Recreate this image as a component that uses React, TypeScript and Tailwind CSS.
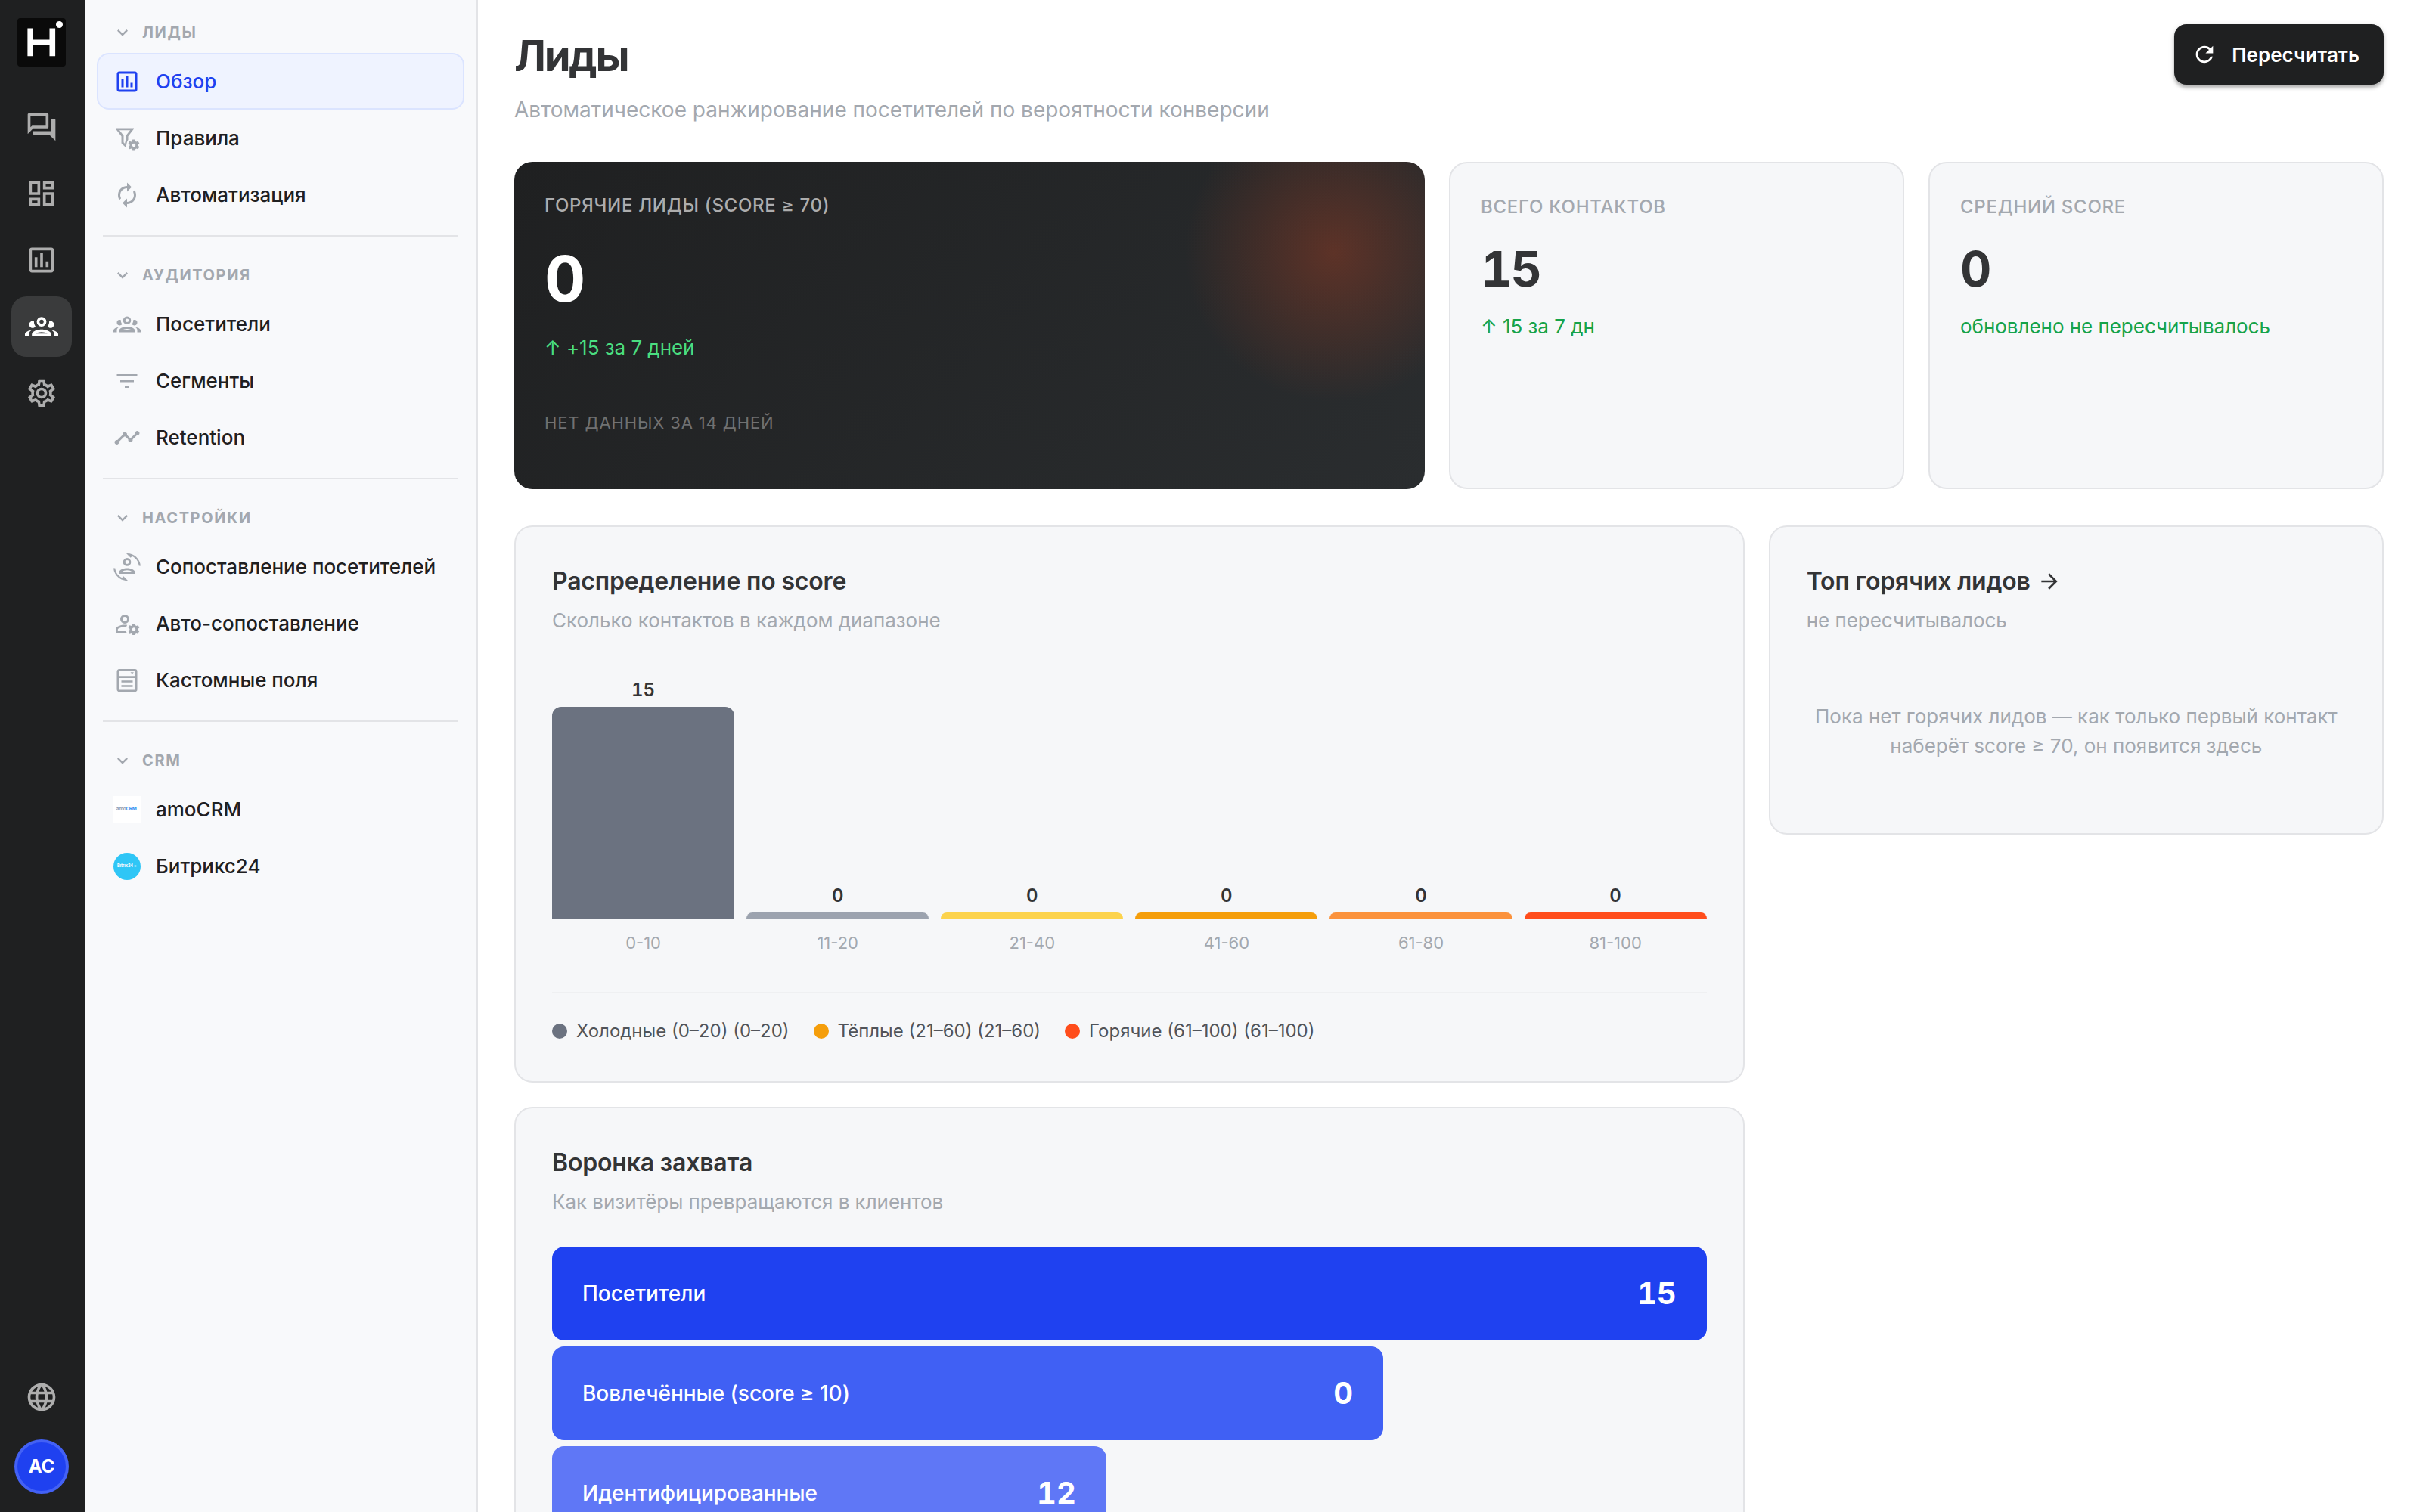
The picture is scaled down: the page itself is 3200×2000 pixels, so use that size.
import type { ReactNode } from "react";
import {
  MdArrowForward,
  MdAutorenew,
  MdExpandMore,
  MdFilterList,
  MdLanguage,
  MdOutlineAssessment,
  MdOutlineDashboard,
  MdOutlineForum,
  MdRefresh,
  MdTimeline,
} from "react-icons/md";

type IconProps = { className?: string };

const cogPath =
  "M17 12C16.84 12 16.76 12.08 16.76 12.21L16.5 13.5C16.28 13.68 15.96 13.84 15.72 14L14.44 13.5C14.36 13.5 14.2 13.5 14.12 13.6L13.16 15.36C13.08 15.44 13.08 15.6 13.24 15.68L14.28 16.5V17.5L13.24 18.32C13.16 18.4 13.08 18.56 13.16 18.64L14.12 20.4C14.2 20.5 14.36 20.5 14.44 20.5L15.72 20C15.96 20.16 16.28 20.32 16.5 20.5L16.76 21.79C16.76 21.92 16.84 22 17 22H19C19.08 22 19.24 21.92 19.24 21.79L19.4 20.5C19.72 20.32 20.04 20.16 20.28 20L21.5 20.5C21.64 20.5 21.8 20.5 21.8 20.4L22.84 18.64C22.92 18.56 22.84 18.4 22.76 18.32L21.72 17.5V16.5L22.76 15.68C22.84 15.6 22.92 15.44 22.84 15.36L21.8 13.6C21.8 13.5 21.64 13.5 21.5 13.5L20.28 14C20.04 13.84 19.72 13.68 19.4 13.5L19.24 12.21C19.24 12.08 19.08 12 19 12H17M18.04 15.5C18.84 15.5 19.5 16.16 19.5 17.04C19.5 17.84 18.84 18.5 18.04 18.5C17.16 18.5 16.5 17.84 16.5 17.04C16.5 16.16 17.16 15.5 18.04 15.5Z";

const FilterCogIcon = ({ className }: IconProps) => (
  <svg viewBox="0 0 24 24" fill="currentColor" className={className}>
    <path fillRule="evenodd" d="M2 3h16v.7L13 10.1V13.2Q11.3 15.5 11.2 20.4L7 16.3V10.1L2 3.7V3zM5.3 4.9 9 9.5v6l1.100 1.1q.2-1.7.9-3V9.5l3.7-4.6H5.3z" />
    <path fillRule="evenodd" transform="translate(0 1)" d={cogPath} />
  </svg>
);

const AccountCogIcon = ({ className }: IconProps) => (
  <svg viewBox="0 0 24 24" fill="currentColor" className={className}>
    <path
      fillRule="evenodd"
      d="M10 4A4 4 0 0 0 6 8A4 4 0 0 0 10 12A4 4 0 0 0 14 8A4 4 0 0 0 10 4M10 6A2 2 0 0 1 12 8A2 2 0 0 1 10 10A2 2 0 0 1 8 8A2 2 0 0 1 10 6M10 13C7.33 13 2 14.33 2 17V20H11.67C11.39 19.41 11.19 18.77 11.09 18.1H3.9V17C3.9 16.36 7.03 14.9 10 14.9C10.43 14.9 10.87 14.94 11.3 15C11.5 14.36 11.77 13.76 12.12 13.21C11.34 13.08 10.6 13 10 13"
    />
    <path fillRule="evenodd" d={cogPath} />
  </svg>
);

const GroupIcon = ({ className }: IconProps) => (
  <svg viewBox="0 0 24 24" fill="currentColor" className={className}>
    <path
      fillRule="evenodd"
      d="M12,5A3.5,3.5 0 0,0 8.5,8.5A3.5,3.5 0 0,0 12,12A3.5,3.5 0 0,0 15.5,8.5A3.5,3.5 0 0,0 12,5M12,7A1.5,1.5 0 0,1 13.5,8.5A1.5,1.5 0 0,1 12,10A1.5,1.5 0 0,1 10.5,8.5A1.5,1.5 0 0,1 12,7M5.5,8A2.5,2.5 0 0,0 3,10.5C3,11.44 3.53,12.25 4.29,12.68C4.65,12.88 5.06,13 5.5,13C5.94,13 6.35,12.88 6.71,12.68C7.08,12.47 7.39,12.17 7.62,11.81C6.89,10.86 6.5,9.7 6.5,8.5C6.5,8.41 6.5,8.31 6.5,8.22C6.2,8.08 5.86,8 5.5,8M18.5,8C18.14,8 17.8,8.08 17.5,8.22C17.5,8.31 17.5,8.41 17.5,8.5C17.5,9.7 17.11,10.86 16.38,11.81C16.5,12 16.63,12.15 16.78,12.3C16.94,12.45 17.1,12.58 17.29,12.68C17.65,12.88 18.06,13 18.5,13C18.94,13 19.35,12.88 19.71,12.68C20.47,12.25 21,11.44 21,10.5A2.5,2.5 0 0,0 18.5,8M12,14C9.66,14 5,15.17 5,17.5V19H19V17.5C19,15.17 14.34,14 12,14M4.71,14.55C2.78,14.78 0,15.76 0,17.5V19H3V17.07C3,16.06 3.69,15.22 4.71,14.55M19.29,14.55C20.31,15.22 21,16.06 21,17.07V19H24V17.5C24,15.76 21.22,14.78 19.29,14.55M12,16C13.53,16 15.24,16.5 16.23,17H7.77C8.76,16.5 10.47,16 12,16Z"
    />
  </svg>
);

const CogIcon = ({ className }: IconProps) => (
  <svg viewBox="0 0 24 24" fill="currentColor" className={className}>
    <path
      fillRule="evenodd"
      d="M12,8A4,4 0 0,1 16,12A4,4 0 0,1 12,16A4,4 0 0,1 8,12A4,4 0 0,1 12,8M12,10A2,2 0 0,0 10,12A2,2 0 0,0 12,14A2,2 0 0,0 14,12A2,2 0 0,0 12,10M10,22C9.75,22 9.54,21.82 9.5,21.58L9.13,18.93C8.5,18.68 7.96,18.34 7.44,17.94L4.95,18.95C4.73,19.03 4.46,18.95 4.34,18.73L2.34,15.27C2.21,15.05 2.27,14.78 2.46,14.63L4.57,12.97L4.5,12L4.57,11L2.46,9.37C2.27,9.22 2.21,8.95 2.34,8.73L4.34,5.27C4.46,5.05 4.73,4.96 4.95,5.05L7.44,6.05C7.96,5.66 8.5,5.32 9.13,5.07L9.5,2.42C9.54,2.18 9.75,2 10,2H14C14.25,2 14.46,2.18 14.5,2.42L14.87,5.07C15.5,5.32 16.04,5.66 16.56,6.05L19.05,5.05C19.27,4.96 19.54,5.05 19.66,5.27L21.66,8.73C21.79,8.95 21.73,9.22 21.54,9.37L19.43,11L19.5,12L19.43,13L21.54,14.63C21.73,14.78 21.79,15.05 21.66,15.27L19.66,18.73C19.54,18.95 19.27,19.04 19.05,18.95L16.56,17.95C16.04,18.34 15.5,18.68 14.87,18.93L14.5,21.58C14.46,21.82 14.25,22 14,22H10M11.25,4L10.88,6.61C9.68,6.86 8.62,7.5 7.85,8.39L5.44,7.35L4.69,8.65L6.8,10.2C6.4,11.37 6.4,12.64 6.8,13.8L4.68,15.36L5.43,16.66L7.86,15.62C8.63,16.5 9.68,17.14 10.87,17.38L11.24,20H12.76L13.13,17.39C14.32,17.14 15.37,16.5 16.14,15.62L18.57,16.66L19.32,15.36L17.2,13.81C17.6,12.64 17.6,11.37 17.2,10.2L19.31,8.65L18.56,7.35L16.15,8.39C15.38,7.5 14.32,6.86 13.12,6.62L12.75,4H11.25Z"
    />
  </svg>
);

const PersonSyncIcon = ({ className }: IconProps) => (
  <svg viewBox="0 0 24 24" fill="currentColor" className={className}>
    <path d="M7.52 21.48C4.25 19.94 1.91 16.76 1.55 13H.05C.56 19.16 5.71 24 12 24l.66-.03-3.81-3.81-1.33 1.32zM12 0l-.66.03 3.81 3.81 1.33-1.33c3.27 1.55 5.61 4.72 5.96 8.48h1.5C23.44 4.84 18.29 0 12 0z" />
    <circle cx="12" cy="7.6" r="2.6" fill="none" stroke="currentColor" strokeWidth="1.9" />
    <path fillRule="evenodd" d="M5 18v-1.5C5 14.2 9.7 13 12 13s7 1.2 7 3.5V18H5zm2.6-1.7h8.8C15.6 15.5 13.6 14.9 12 14.9s-3.6.6-4.4 1.4z" />
  </svg>
);

const FormIcon = ({ className }: IconProps) => (
  <svg viewBox="0 0 24 24" fill="none" stroke="currentColor" strokeWidth="1.8" className={className}>
    <rect x="3.9" y="2.9" width="16.2" height="18.3" rx="1.2" />
    <path d="M4 9.1h16M7 13h10M7 17h10" />
    <path d="M15 4.9h3l-1.5 1.5z" fill="currentColor" stroke="none" />
  </svg>
);

const AmoLogo = () => (
  <span className="flex size-9 items-center justify-center bg-white text-[6.5px] leading-none font-bold tracking-[-0.06em]">
    <span className="text-[#8c9bb0]">amo</span>
    <span className="text-[#2f8ff0]">CRM.</span>
  </span>
);

const BitrixLogo = () => (
  <span className="flex size-9 items-center justify-center gap-px rounded-full bg-[#2fc6f6] text-[5.5px] leading-none font-bold text-white">
    Bitrix24
    <span className="h-[3px] w-1 rounded-full border border-white/40" />
  </span>
);

type Item = { label: string; icon: ReactNode; active?: boolean };

const sections: { title: string; items: Item[] }[] = [
  {
    title: "ЛИДЫ",
    items: [
      { label: "Обзор", icon: <MdOutlineAssessment className="size-9" />, active: true },
      { label: "Правила", icon: <FilterCogIcon className="size-9" /> },
      { label: "Автоматизация", icon: <MdAutorenew className="size-9" /> },
    ],
  },
  {
    title: "АУДИТОРИЯ",
    items: [
      { label: "Посетители", icon: <GroupIcon className="size-9" /> },
      { label: "Сегменты", icon: <MdFilterList className="size-9" /> },
      { label: "Retention", icon: <MdTimeline className="size-9" /> },
    ],
  },
  {
    title: "НАСТРОЙКИ",
    items: [
      { label: "Сопоставление посетителей", icon: <PersonSyncIcon className="size-9" /> },
      { label: "Авто-сопоставление", icon: <AccountCogIcon className="size-9" /> },
      { label: "Кастомные поля", icon: <FormIcon className="size-9" /> },
    ],
  },
  {
    title: "CRM",
    items: [
      { label: "amoCRM", icon: <AmoLogo /> },
      { label: "Битрикс24", icon: <BitrixLogo /> },
    ],
  },
];

const railIcons = [MdOutlineForum, MdOutlineDashboard, MdOutlineAssessment, GroupIcon, CogIcon];

const bars = [
  { range: "0-10", value: 15, height: 280, color: "bg-[#6b7280]" },
  { range: "11-20", value: 0, height: 8, color: "bg-[#9ca3af]" },
  { range: "21-40", value: 0, height: 8, color: "bg-[#fcd34d]" },
  { range: "41-60", value: 0, height: 8, color: "bg-[#f59e0b]" },
  { range: "61-80", value: 0, height: 8, color: "bg-[#fb923c]" },
  { range: "81-100", value: 0, height: 8, color: "bg-[#ff4d1c]" },
];

const legend = [
  { label: "Холодные (0–20) (0–20)", color: "bg-[#6b7280]" },
  { label: "Тёплые (21–60) (21–60)", color: "bg-[#f59e0b]" },
  { label: "Горячие (61–100) (61–100)", color: "bg-[#ff4d1c]" },
];

const funnel = [
  { label: "Посетители", value: 15, width: 100, color: "bg-[#1f41f0]" },
  { label: "Вовлечённые (score ≥ 10)", value: 0, width: 72, color: "bg-[#4060f4]" },
  { label: "Идентифицированные", value: 12, width: 48, color: "bg-[#5f77f6]" },
];

const Rail = () => (
  <aside className="flex w-28 shrink-0 flex-col items-center bg-[#1f2021] py-6 pr-0.5">
    <svg viewBox="0 0 64 64" className="size-16">
      <rect width="64" height="64" rx="4" fill="#0a0a0a" />
      <path d="M17.2 13.5v36.8M46.3 13.5v36.8M17.2 32.2h29" stroke="#fff" strokeWidth="7.6" fill="none" />
      <circle cx="55.5" cy="8.5" r="4.5" fill="#fff" />
    </svg>
    <nav className="mt-10 flex flex-col gap-2">
      {railIcons.map((Icon, i) => (
        <div
          key={i}
          className={
            i === 3
              ? "flex size-20 items-center justify-center rounded-[20px] bg-[#3a3b3c] text-white"
              : "flex size-20 items-center justify-center text-[#adadad]"
          }
        >
          <Icon className="size-11" />
        </div>
      ))}
    </nav>
    <div className="mt-auto flex flex-col items-center gap-4">
      <div className="flex size-20 items-center justify-center text-[#adadad]">
        <MdLanguage className="size-11" />
      </div>
      <div className="flex size-18 items-center justify-center rounded-full border-4 border-[#4361f5] bg-[#1f41f0] text-2xl font-bold text-white">
        AC
      </div>
    </div>
  </aside>
);

const Sidebar = () => (
  <aside className="w-130 shrink-0 border-r-2 border-[#e3e4e7] bg-[#f8f9fb] px-4 pt-2">
    {sections.map((section, i) => (
      <div key={section.title}>
        {i > 0 && <div className="mx-2 my-4 h-0.5 bg-[#e3e4e7]" />}
        <div className="flex h-[62px] items-center gap-3 pt-[7px] pl-5 text-[#a3a8af]">
          <MdExpandMore className="size-7" />
          <span className="text-[20px] font-bold tracking-[0.08em]">{section.title}</span>
        </div>
        {section.items.map((item) => (
          <div
            key={item.label}
            className={
              item.active
                ? "flex h-[75px] items-center gap-5 rounded-2xl border-2 border-[#dbe4ff] bg-[#eff3ff] px-5 text-[#1f41f0]"
                : "flex h-[75px] items-center gap-5 border-2 border-transparent px-5 text-[#a3a8af]"
            }
          >
            {item.icon}
            <span className={item.active ? "text-[26px] font-medium" : "text-[26px] font-medium text-[#1f2021]"}>
              {item.label}
            </span>
          </div>
        ))}
      </div>
    ))}
  </aside>
);

const StatCard = ({ label, value, note }: { label: string; value: string; note: string }) => (
  <div className="rounded-3xl border-2 border-[#e3e4e7] bg-[#f6f7f9] p-10">
    <p className="text-[24px] leading-[36px] font-medium tracking-[0.03em] text-[#a3a8af]">{label}</p>
    <p className="mt-6 text-[64px] leading-[80px] font-bold tracking-[-0.03em] tabular-nums text-[#333436]">{value}</p>
    <p className="mt-4 text-[26px] leading-[39px] tracking-[-0.03px] text-[#16a34a]">{note}</p>
  </div>
);

const CardHeader = ({ title, subtitle, arrow }: { title: string; subtitle: string; arrow?: boolean }) => (
  <div>
    <h2 className="flex items-center gap-[9px] text-[32px] leading-[48px] font-semibold tracking-[-0.18px] text-[#333436]">
      {title}
      {arrow && <MdArrowForward className="size-8" />}
    </h2>
    <p className="mt-2 text-[26px] leading-[39px] tracking-[-0.03px] text-[#a3a8af]">{subtitle}</p>
  </div>
);

const ScoreChart = () => (
  <section className="rounded-3xl border-2 border-[#e3e4e7] bg-[#f6f7f9] p-12">
    <CardHeader title="Распределение по score" subtitle="Сколько контактов в каждом диапазоне" />
    <div className="mt-[54px] flex h-[321px] items-end gap-4">
      {bars.map((bar) => (
        <div key={bar.range} className="flex flex-1 flex-col items-center gap-1">
          <span className="text-2xl leading-[36px] font-semibold tabular-nums text-[#333436]">{bar.value}</span>
          <div className={`w-full rounded-t-xl ${bar.color}`} style={{ height: bar.height }} />
        </div>
      ))}
    </div>
    <div className="mt-4 flex gap-4">
      {bars.map((bar) => (
        <span key={bar.range} className="flex-1 text-center text-[22px] leading-[33px] text-[#a3a8af]">
          {bar.range}
        </span>
      ))}
    </div>
    <div className="mt-12 flex gap-8 border-t-2 border-[#eff0f2] pt-8">
      {legend.map((entry) => (
        <div key={entry.label} className="flex items-center gap-3">
          <span className={`size-5 rounded-full ${entry.color}`} />
          <span className="text-2xl leading-[36px] text-[#515459]">{entry.label}</span>
        </div>
      ))}
    </div>
  </section>
);

const Funnel = () => (
  <section className="rounded-3xl border-2 border-[#e3e4e7] bg-[#f6f7f9] p-12">
    <CardHeader title="Воронка захвата" subtitle="Как визитёры превращаются в клиентов" />
    <div className="mt-10 flex flex-col gap-2">
      {funnel.map((step) => (
        <div
          key={step.label}
          className={`flex h-[124px] items-center justify-between rounded-2xl px-10 text-white ${step.color}`}
          style={{ width: `${step.width}%` }}
        >
          <span className="text-[28px] font-medium tracking-[-0.04px]">{step.label}</span>
          <span className="text-[40px] font-bold tabular-nums">{step.value}</span>
        </div>
      ))}
    </div>
  </section>
);

const App = () => {
  return (
    <div className="flex h-[2000px] w-[3200px] overflow-hidden bg-white font-['Inter',sans-serif]">
      <Rail />
      <Sidebar />
      <main className="flex-1 overflow-hidden px-12 pt-8">
        <header className="flex h-[182px] items-start justify-between">
          <div>
            <h1 className="text-[56px] leading-[84px] font-bold tracking-[-0.04em] text-[#333436]">Лиды</h1>
            <p className="mt-2 text-[28px] leading-[42px] text-[#a3a8af]">
              Автоматическое ранжирование посетителей по вероятности конверсии
            </p>
          </div>
          <button className="flex h-20 items-center gap-[19px] rounded-2xl bg-[#1f2021] pr-8 pl-[23px] text-[26px] font-semibold text-white shadow-[0_2px_8px_rgba(0,0,0,0.12),0_4px_4px_rgba(0,0,0,0.25)]">
            <MdRefresh className="size-[34px]" />
            Пересчитать
          </button>
        </header>

        {/* KPI cards */}
        <div className="grid h-[433px] grid-cols-[2fr_1fr_1fr] gap-8">
          <div className="relative overflow-hidden rounded-3xl bg-linear-135 from-[#1f2021] to-[#2a2d2f] p-10">
            <div className="absolute -top-20 -right-20 size-100 bg-[radial-gradient(circle,rgba(255,77,28,0.25),transparent_70%)]" />
            <p className="text-[24px] leading-[36px] font-medium tracking-[0.03em] text-[#adadad]">ГОРЯЧИЕ ЛИДЫ (SCORE ≥ 70)</p>
            <p className="mt-6 text-[84px] leading-[110px] font-bold tabular-nums text-white">0</p>
            <p className="mt-4 text-[26px] leading-[39px] tracking-[-0.03px] text-[#4ade80]">↑ +15 за 7 дней</p>
            <p className="mt-16 text-[22px] leading-[33px] tracking-[0.04em] text-[#707172]">НЕТ ДАННЫХ ЗА 14 ДНЕЙ</p>
          </div>
          <StatCard label="ВСЕГО КОНТАКТОВ" value="15" note="↑ 15 за 7 дн" />
          <StatCard label="СРЕДНИЙ SCORE" value="0" note="обновлено не пересчитывалось" />
        </div>

        <div className="mt-12 grid grid-cols-[2fr_1fr] items-start gap-8">
          <div className="flex flex-col gap-8">
            <ScoreChart />
            <Funnel />
          </div>
          <section className="rounded-3xl border-2 border-[#e3e4e7] bg-[#f6f7f9] p-12">
            <CardHeader title="Топ горячих лидов" subtitle="не пересчитывалось" arrow />
            <p className="mt-10 py-12 text-center text-[26px] leading-[39px] text-[#a3a8af]">
              Пока нет горячих лидов — как только первый контакт
              <br />
              наберёт score ≥ 70, он появится здесь
            </p>
          </section>
        </div>
      </main>
    </div>
  );
};

export default App;
